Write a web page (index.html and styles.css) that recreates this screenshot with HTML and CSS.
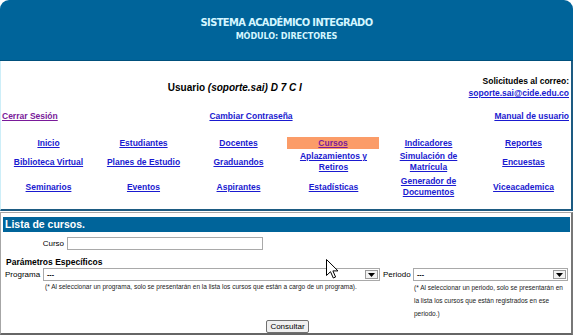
FILE: index.html
```html
<!DOCTYPE html>
<html lang="es">
<head>
<meta charset="utf-8">
<title>Sistema Académico Integrado</title>
<link rel="stylesheet" href="styles.css">
</head>
<body>
<div class="frame">
  <header class="header">
    <div class="title">SISTEMA ACADÉMICO INTEGRADO</div>
    <div class="subtitle">MÓDULO: DIRECTORES</div>
  </header>
  <main class="main">
    <div class="user-row">
      <div class="user">Usuario <em>(soporte.sai) D 7 C I</em></div>
      <div class="contact">
        <div>Solicitudes al correo:</div>
        <a href="#" class="link">soporte.sai@cide.edu.co</a>
      </div>
    </div>
    <div class="links-row">
      <a href="#" class="link visited">Cerrar Sesión</a>
      <a href="#" class="link center">Cambiar Contraseña</a>
      <a href="#" class="link right">Manual de usuario</a>
    </div>
    <nav class="nav">
      <div class="cell"><a href="#" class="link">Inicio</a></div>
      <div class="cell"><a href="#" class="link">Estudiantes</a></div>
      <div class="cell"><a href="#" class="link">Docentes</a></div>
      <div class="cell active"><a href="#" class="link visited">Cursos</a></div>
      <div class="cell"><a href="#" class="link">Indicadores</a></div>
      <div class="cell"><a href="#" class="link">Reportes</a></div>
      <div class="cell"><a href="#" class="link">Biblioteca Virtual</a></div>
      <div class="cell"><a href="#" class="link">Planes de Estudio</a></div>
      <div class="cell"><a href="#" class="link">Graduandos</a></div>
      <div class="cell"><a href="#" class="link">Aplazamientos y<br>Retiros</a></div>
      <div class="cell"><a href="#" class="link">Simulación de<br>Matrícula</a></div>
      <div class="cell"><a href="#" class="link">Encuestas</a></div>
      <div class="cell"><a href="#" class="link">Seminarios</a></div>
      <div class="cell"><a href="#" class="link">Eventos</a></div>
      <div class="cell"><a href="#" class="link">Aspirantes</a></div>
      <div class="cell"><a href="#" class="link">Estadísticas</a></div>
      <div class="cell"><a href="#" class="link">Generador de<br>Documentos</a></div>
      <div class="cell"><a href="#" class="link">Viceacademica</a></div>
    </nav>
  </main>
  <section class="panel">
    <div class="panel-title">Lista de cursos.</div>
    <div class="curso-row">
      <label class="curso-label">Curso</label>
      <input class="text-input" type="text">
    </div>
    <div class="params-title">Parámetros Específicos</div>
    <div class="params">
      <span class="p-label">Programa</span>
      <div class="select">
        <span class="select-value">---</span>
        <span class="select-arrow"><svg width="7" height="4" viewBox="0 0 7 4"><path d="M0 0H7L3.5 4Z" fill="#000"/></svg></span>
      </div>
      <span class="p-label periodo">Periodo</span>
      <div class="select">
        <span class="select-value">---</span>
        <span class="select-arrow"><svg width="7" height="4" viewBox="0 0 7 4"><path d="M0 0H7L3.5 4Z" fill="#000"/></svg></span>
      </div>
      <div class="note note-left">(* Al seleccionar un programa, solo se presentarán en la lista los cursos que están a cargo de un programa).</div>
      <div class="note note-right">(* Al seleccionar un periodo, solo se presentarán en la lista los cursos que están registrados en ese periodo.)</div>
    </div>
    <div class="actions">
      <button class="button" type="button">Consultar</button>
    </div>
  </section>
</div>
<svg class="cursor" width="13" height="20" viewBox="0 0 13 20"><path d="M0.5 0.5V16.5L4.5 12.7L7.3 19L9.6 18L6.9 11.9H12Z" fill="#fff" stroke="#000" stroke-width="1" stroke-linejoin="round"/></svg>
</body>
</html>
```

FILE: styles.css
```css
html, body {
  margin: 0;
  padding: 0;
  background: #ffffff;
}
body {
  font-family: "Liberation Sans", Arial, sans-serif;
  color: #000;
  position: relative;
  width: 575px;
  height: 336px;
  overflow: hidden;
}
.frame {
  width: 573px;
}
.header {
  height: 61px;
  background: #00649a;
  border-radius: 9px 9px 0 0;
  border-bottom: 1px solid #00507c;
  text-align: center;
  color: #d4f6ff;
  font-family: "Liberation Sans Narrow", "DejaVu Sans Condensed", "Liberation Sans", sans-serif;
  font-weight: bold;
  padding-top: 16px;
  box-sizing: border-box;
}
.title {
  font-size: 11px;
  line-height: 14px;
  letter-spacing: -0.6px;
}
.subtitle {
  font-size: 9px;
  line-height: 13px;
  letter-spacing: -0.1px;
}
.main {
  border-left: 1px solid #cdeef8;
  border-right: 2px solid #1d5b82;
  border-bottom: 2px solid #1d5b82;
  padding-top: 14px;
  height: 134px;
}
.link {
  color: #1a1ad0;
  font-weight: bold;
  font-size: 8.5px;
  text-decoration: underline;
}
.link.visited {
  color: #7a1a9a;
}
.user-row {
  display: grid;
  grid-template-columns: 1fr auto;
  height: 24px;
  align-items: center;
}
.user {
  text-align: center;
  font-weight: bold;
  font-size: 10px;
}
.user em {
  font-style: italic;
}
.contact {
  text-align: right;
  font-weight: bold;
  font-size: 8.5px;
  line-height: 12px;
  padding-right: 2px;
}
.links-row {
  display: grid;
  grid-template-columns: 158px 182px 1fr;
  margin-top: 11px;
  line-height: 12px;
  padding: 0 2px 0 1px;
}
.links-row .center {
  text-align: center;
}
.links-row .right {
  text-align: right;
}
.nav {
  display: grid;
  grid-template-columns: repeat(6, 1fr);
  grid-template-rows: 12px 22px 24px;
  row-gap: 2px;
  margin-top: 15px;
}
.cell {
  display: flex;
  align-items: center;
  justify-content: center;
  text-align: center;
  line-height: 11px;
}
.cell.active {
  background: #fb9c68;
  margin: 0 2px 0 1px;
}
.panel {
  margin-top: 1px;
  width: 573px;
  box-sizing: border-box;
  border: 1px solid #a6a6a6;
  border-right: 2px solid #777;
  border-bottom: 2px solid #666;
  padding: 3px 1px 1px 2px;
  height: 123px;
  font-size: 8px;
}
.panel-title {
  background: #00649a;
  color: #fff;
  font-weight: bold;
  font-size: 10.5px;
  height: 15px;
  line-height: 15px;
  padding-left: 2px;
  margin-top: 1px;
}
.curso-row {
  display: flex;
  align-items: center;
  margin-top: 4px;
  height: 14px;
}
.curso-label {
  width: 61px;
  text-align: right;
  padding-right: 3px;
}
.text-input {
  width: 196px;
  height: 13px;
  box-sizing: border-box;
  border: 1px solid #a9a9a9;
  margin: 0;
  padding: 0;
  background: #fff;
}
.params-title {
  font-weight: bold;
  font-size: 8.5px;
  margin-top: 6px;
  padding-left: 3px;
  line-height: 12px;
}
.params {
  display: grid;
  grid-template-columns: 38px 338px 32px 155px;
  grid-template-rows: 13px auto;
  margin-left: 2px;
}
.p-label {
  line-height: 13px;
}
.p-label.periodo {
  padding-left: 2px;
}
.select {
  display: flex;
  align-items: center;
  justify-content: space-between;
  border: 1px solid #a9a9a9;
  height: 13px;
  box-sizing: border-box;
  background: #fff;
  padding: 0 1px 0 3px;
}
.params .select:nth-of-type(1) {
  margin-right: 1px;
}
.select-value {
  font-size: 7px;
  font-weight: bold;
  line-height: 11px;
}
.select-arrow {
  width: 13px;
  height: 9px;
  box-sizing: border-box;
  border: 1px solid #9a9a9a;
  background: #f2f2f2;
  display: flex;
  align-items: center;
  justify-content: center;
}
.note {
  font-size: 6.5px;
  color: #222;
  line-height: 13px;
  padding-left: 2px;
}
.note-left {
  grid-column: 2 / 3;
  grid-row: 2;
  white-space: nowrap;
  line-height: 12px;
}
.note-right {
  grid-column: 4 / 5;
  grid-row: 2;
  padding-left: 1px;
}
.actions {
  display: flex;
  justify-content: center;
  margin-top: 0;
  padding-left: 2px;
}
.button {
  font-family: "Liberation Sans", Arial, sans-serif;
  font-size: 8px;
  height: 13px;
  padding: 0 3px;
  line-height: 11px;
  background: #f0f0f0;
  border: 1px solid #707070;
  border-radius: 2px;
  color: #000;
}
.cursor {
  position: absolute;
  left: 326px;
  top: 259px;
}
```
